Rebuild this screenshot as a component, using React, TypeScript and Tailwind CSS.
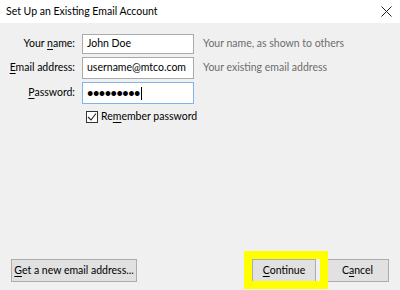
import React from 'react';

const font = { fontFamily: 'Lato, "Noto Sans", Arial, sans-serif' };

function U({ children }: { children: React.ReactNode }) {
  return <span className="underline underline-offset-2">{children}</span>;
}

function Row({ label, children, hint }: { label: React.ReactNode; children: React.ReactNode; hint?: string }) {
  return (
    <div className="flex items-center">
      <div className="w-[75px] text-right text-[10.5px] text-black whitespace-nowrap">{label}</div>
      <div className="ml-[7px]">{children}</div>
      {hint && <div className="ml-[9px] text-[10.5px] text-[#6d6d6d] whitespace-nowrap">{hint}</div>}
    </div>
  );
}

export default function App() {
  return (
    <div className="w-[400px] h-[290px] bg-[#f0f0f0] flex flex-col relative overflow-hidden" style={font}>
      <div className="h-[23px] bg-white flex items-center justify-between pl-[6px] pr-[7px] shrink-0">
        <span className="text-[10.5px] text-black whitespace-nowrap">Set Up an Existing Email Account</span>
        <svg width="11" height="11" viewBox="0 0 11 11" className="mr-[1px]">
          <path d="M0.5 0.5 L10.5 10.5 M10.5 0.5 L0.5 10.5" stroke="#222" strokeWidth="1" />
        </svg>
      </div>

      <div className="flex flex-col gap-[3px] pt-[11px]">
        <Row label={<>Your <U>n</U>ame:</>} hint="Your name, as shown to others">
          <div className="w-[112px] h-[20px] bg-white border border-[#aaaaaa] flex items-center px-[4px] text-[10.5px] text-black whitespace-nowrap">John Doe</div>
        </Row>
        <Row label={<><U>E</U>mail address:</>} hint="Your existing email address">
          <div className="w-[112px] h-[22px] bg-white border border-[#aaaaaa] flex items-center px-[4px] text-[10.5px] text-black whitespace-nowrap">username@mtco.com</div>
        </Row>
        <Row label={<><U>P</U>assword:</>}>
          <div className="w-[112px] h-[22px] bg-white border border-[#7eb4ea] flex items-center px-[4px] text-[11px] text-black">
            <span className="tracking-[-0.5px] font-bold">•••••••••</span>
            <span className="w-px h-[13px] bg-black ml-[1px]" />
          </div>
        </Row>
        <div className="flex items-center ml-[86px] mt-[3px] h-[13px]">
          <div className="w-[12px] h-[12px] border border-[#333] bg-white flex items-center justify-center">
            <svg width="10" height="10" viewBox="0 0 10 10">
              <path d="M1 5 L4 8 L9 1.5" fill="none" stroke="#222" strokeWidth="1.1" />
            </svg>
          </div>
          <span className="ml-[3px] text-[10.5px] text-black whitespace-nowrap">Re<U>m</U>ember password</span>
        </div>
      </div>

      <div className="flex-1" />

      <div className="flex items-center px-[11px] mb-[8px]">
        <button className="w-[126px] h-[23px] bg-[#e1e1e1] border border-[#adadad] text-[10.5px] text-black whitespace-nowrap">
          <U>G</U>et a new email address...
        </button>
        <div className="flex-1" />
        <button className="w-[64px] h-[23px] bg-[#e1e1e1] border border-[#adadad] text-[10.5px] text-black">
          <U>C</U>ontinue
        </button>
        <button className="w-[63px] h-[23px] ml-[10px] bg-[#e1e1e1] border border-[#adadad] text-[10.5px] text-black">
          C<U>a</U>ncel
        </button>
      </div>

      <div className="absolute left-[244px] top-[251px] w-[84px] h-[38px] border-[8px] border-[#ffff00] pointer-events-none" />
    </div>
  );
}
